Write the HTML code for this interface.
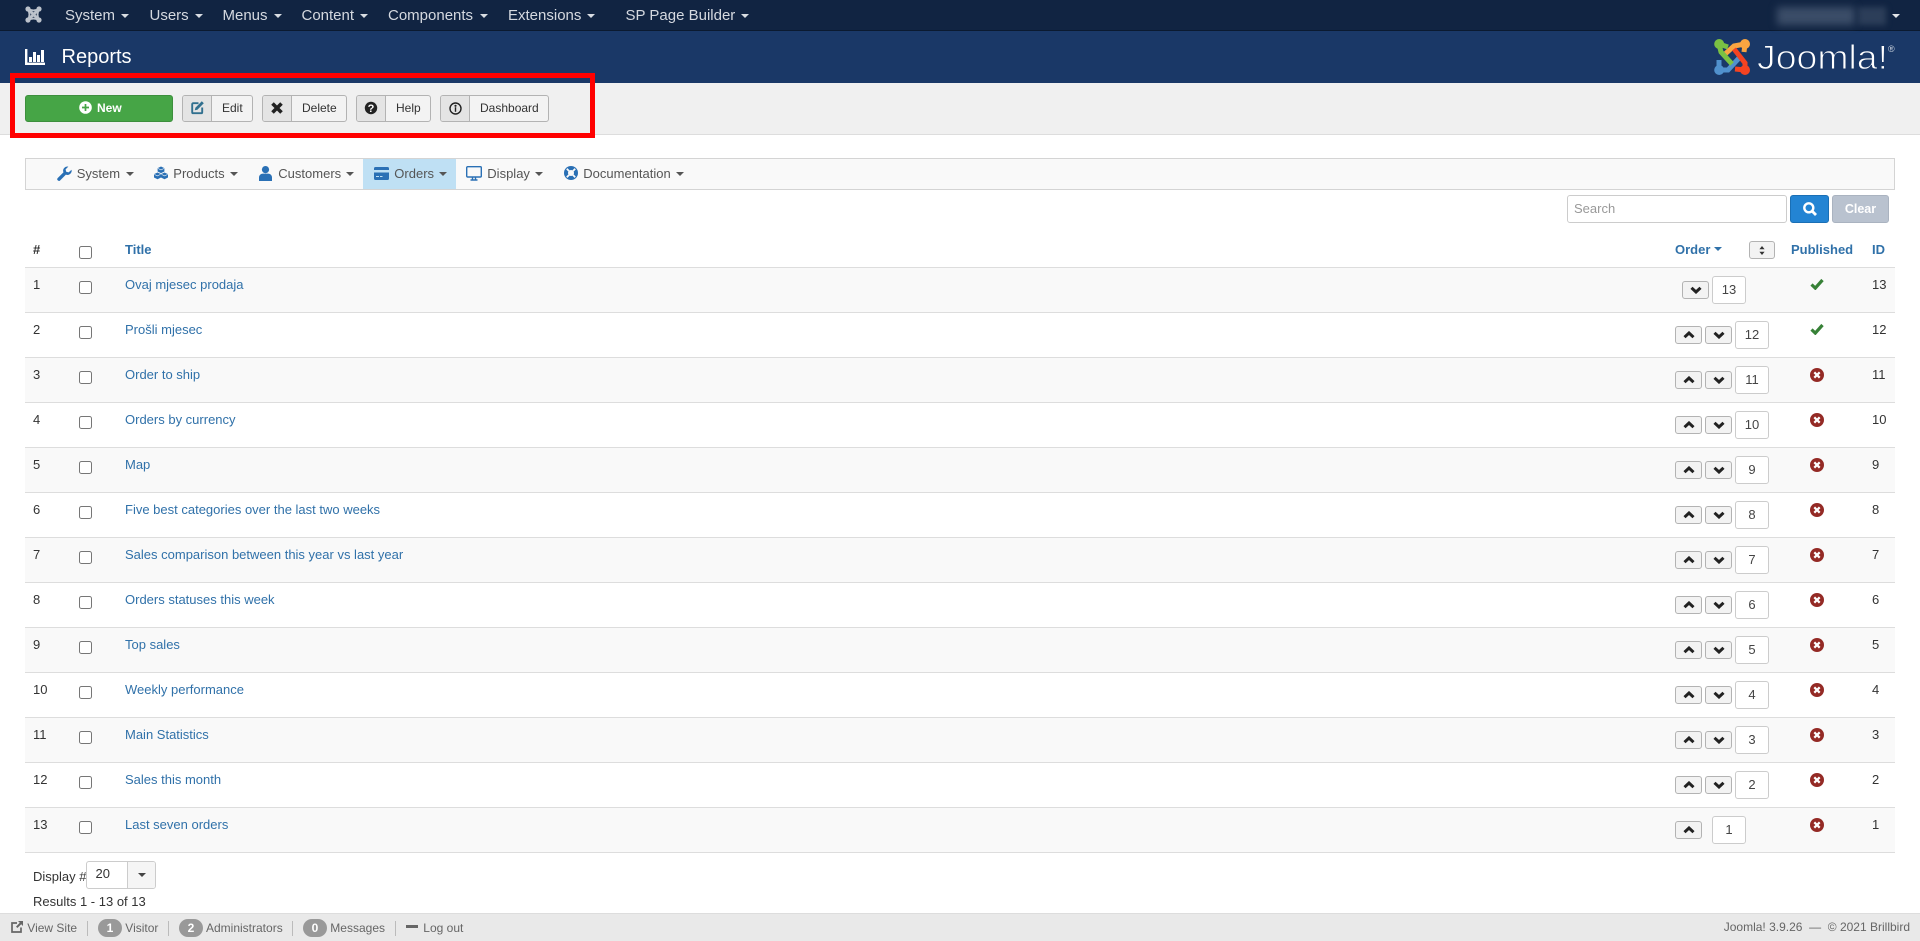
<!DOCTYPE html>
<html lang="en"><head><meta charset="utf-8"><title>Reports</title>
<style>
*{box-sizing:border-box}
html,body{margin:0;padding:0;width:1920px;height:941px;overflow:hidden;background:#fff;font-family:"Liberation Sans",sans-serif;font-size:13px;color:#333}
.a{position:absolute;white-space:nowrap}
svg{position:absolute;overflow:visible}
.nav{color:#d5d9e0;font-size:15px;line-height:20px;top:6px}
.car{position:absolute;width:0;height:0;border-left:4px solid transparent;border-right:4px solid transparent;border-top:4px solid #d9dde3}
.tb{position:absolute;top:95px;height:27px;border:1px solid #b3b3b3;border-radius:3px;background:#f3f3f3;font-size:12px;line-height:25px;color:#333}
.tb i{position:absolute;left:0;top:0;width:29px;height:25px;background:#e4e4e4;border-right:1px solid #b3b3b3;border-radius:2px 0 0 2px}
.tb span{position:absolute;top:0}
.sm{font-size:13px;line-height:18px;top:165px;color:#555}
.car2{position:absolute;top:172px;width:0;height:0;border-left:4px solid transparent;border-right:4px solid transparent;border-top:4px solid #555}
.th{top:241px;line-height:18px;font-weight:bold;color:#3071a9}
.r{position:absolute;left:25px;width:1870px;height:46px;border-top:1px solid #ddd;border-bottom:1px solid #ddd;line-height:18px}
.r.o{background:#f9f9f9}
.r>*{position:absolute}
.n{left:8px;top:8px}
.r input{left:54px;top:13px;margin:0;width:13px;height:13px}
.l{left:100px;top:8px;color:#3071a9}
.id{left:1847px;top:8px}
.b{width:27px;height:18px;top:13px;background:#f3f3f3;border:1px solid #b3b3b3;border-radius:3px}
.u{left:1650px}.d{left:1680px}
.v{left:1710px;top:8px;width:34px;height:28px;background:#fff;border:1px solid #ccc;border-radius:3px;text-align:center;line-height:26px;font-size:13px;color:#444}
.b svg{left:7px;top:4px}
.p{left:1785px;top:10px}
.f{top:919px;font-size:12px;line-height:18px;color:#666}
.sep{position:absolute;top:921px;width:1px;height:15px;background:#bbb}
.bd{position:absolute;top:919px;height:18px;width:24px;border-radius:9px;background:#999;color:#fff;font-weight:bold;font-size:12px;line-height:18px;text-align:center}
</style></head><body>

<div class="a" style="left:0;top:0;width:1920px;height:31px;background:#112442;border-bottom:1px solid #0b1a30"></div>
<div class="a" style="left:0;top:31px;width:1920px;height:52px;background:#1a3867"></div>
<div class="a" style="left:0;top:83px;width:1920px;height:52px;background:#f0f0f0;border-bottom:1px solid #ddd"></div>

<svg style="left:25px;top:6px" width="17" height="17" viewBox="0 0 17 17">
<g stroke="#bcc2cb" stroke-width="3" fill="none"><path d="M3 3 L14 14M14 3 L3 14"/><path d="M3 3C7 5 10 5 14 3M14 3C12 7 12 10 14 14M14 14C10 12 7 12 3 14M3 14C5 10 5 7 3 3" stroke-width="2"/></g>
<g fill="#bcc2cb"><circle cx="3" cy="3" r="2.6"/><circle cx="14" cy="3" r="2.6"/><circle cx="14" cy="14" r="2.6"/><circle cx="3" cy="14" r="2.6"/></g></svg>

<div class="a nav" style="left:65px">System</div><div class="car" style="left:121px;top:14px"></div>
<div class="a nav" style="left:149.5px">Users</div><div class="car" style="left:195px;top:14px"></div>
<div class="a nav" style="left:222.5px">Menus</div><div class="car" style="left:274px;top:14px"></div>
<div class="a nav" style="left:301.5px">Content</div><div class="car" style="left:360px;top:14px"></div>
<div class="a nav" style="left:388px">Components</div><div class="car" style="left:480px;top:14px"></div>
<div class="a nav" style="left:508px">Extensions</div><div class="car" style="left:587px;top:14px"></div>
<div class="a nav" style="left:625.5px">SP Page Builder</div><div class="car" style="left:741px;top:14px"></div>

<div class="a" style="left:1777px;top:7px;width:78px;height:18px;background:#3b4d68;filter:blur(4px)"></div>
<div class="a" style="left:1858px;top:7px;width:28px;height:18px;background:#2c3e59;filter:blur(3px)"></div>
<div class="car" style="left:1892px;top:14px;border-top-color:#e4e6ea"></div>

<svg style="left:25px;top:49px" width="20" height="16" viewBox="0 0 20 16"><g fill="#fff"><rect x="0" y="0" width="2.4" height="16"/><rect x="0" y="13.6" width="20" height="2.4"/><rect x="4" y="8" width="3" height="5"/><rect x="8" y="3" width="3" height="10"/><rect x="12" y="6" width="3" height="7"/><rect x="16" y="1" width="3" height="12"/></g></svg>
<div class="a" style="left:61.5px;top:45px;font-size:20px;line-height:24px;color:#fff">Reports</div>

<svg style="left:1714px;top:39px" width="36" height="36" viewBox="0 0 36 36">
<g fill="none" stroke-width="5">
<path stroke="#5091cd" d="M5 31 L5 21 M5 31 L14 31 L26 18"/>
<path stroke="#f9a541" d="M31 5 L30 13 M31 5 L20 7 L10 16"/>
<path stroke="#f44321" d="M31 31 L21 30 M31 31 L31 24 L20 10"/>
<path stroke="#7ac143" d="M5 5 L14 8 M5 5 L7 13 L18 25"/>
</g>
<circle cx="5.2" cy="5" r="5" fill="#7ac143"/><circle cx="31" cy="5" r="5" fill="#f9a541"/><circle cx="31" cy="31" r="5" fill="#f44321"/><circle cx="5.2" cy="31" r="5" fill="#5091cd"/></svg>
<svg style="left:1757px;top:39px" width="140" height="36" viewBox="0 0 140 36">
<text x="0" y="30" font-family="Liberation Sans" font-size="34" fill="#fff" stroke="#1a3867" stroke-width="1" textLength="131" lengthAdjust="spacingAndGlyphs">Joomla!</text>
<text x="131" y="13" font-family="Liberation Sans" font-size="9" fill="#cfd6e0">®</text></svg>

<!-- toolbar -->
<div class="a" style="left:25px;top:95px;width:148px;height:27px;background:#46a546;border:1px solid #3d8f3d;border-radius:3px"></div>
<svg style="left:79px;top:101px" width="13" height="13" viewBox="0 0 13 13"><circle cx="6.5" cy="6.5" r="6.3" fill="#fff"/><path d="M6.5 3v7M3 6.5h7" stroke="#46a546" stroke-width="1.7"/></svg>
<div class="a" style="left:97px;top:99px;font-size:12px;line-height:18px;color:#fff;font-weight:bold">New</div>

<div class="tb" style="left:182px;width:71px"><i></i><span style="left:39px">Edit</span></div>
<svg style="left:191px;top:101px" width="13" height="13" viewBox="0 0 13 13"><path d="M7.5 2.2H2.2a1 1 0 0 0-1 1v8a1 1 0 0 0 1 1h8a1 1 0 0 0 1-1V6.5" fill="none" stroke="#31708f" stroke-width="1.9"/><path d="M10.8.3l2 2-6.4 6.4-2.6.6.6-2.6z" fill="#31708f"/></svg>

<div class="tb" style="left:262px;width:85px"><i></i><span style="left:39px">Delete</span></div>
<svg style="left:271px;top:102px" width="12" height="12" viewBox="0 0 12 12"><path d="M1.5 1.5L10.5 10.5M10.5 1.5L1.5 10.5" stroke="#222" stroke-width="3.6"/></svg>

<div class="tb" style="left:356px;width:75px"><i></i><span style="left:39px">Help</span></div>
<svg style="left:365px;top:102px" width="12" height="12" viewBox="0 0 12 12"><circle cx="6" cy="6" r="6.2" fill="#222"/><text x="6" y="10" font-family="Liberation Sans" font-weight="bold" font-size="11" fill="#fff" text-anchor="middle">?</text></svg>

<div class="tb" style="left:440px;width:109px"><i></i><span style="left:39px">Dashboard</span></div>
<svg style="left:449px;top:102px" width="13" height="13" viewBox="0 0 13 13"><circle cx="6.5" cy="6.5" r="5.5" fill="none" stroke="#222" stroke-width="1.4"/><circle cx="6.5" cy="3.8" r="1.1" fill="#222"/><rect x="5.8" y="5.2" width="1.4" height="4.6" fill="#222"/></svg>

<div class="a" style="left:10px;top:73px;width:585px;height:65px;border:5px solid #f00"></div>

<!-- submenu -->
<div class="a" style="left:25px;top:158px;width:1870px;height:32px;background:#f9f9f9;border:1px solid #d4d4d4"></div>
<div class="a" style="left:363px;top:159px;width:93px;height:30px;background:#bfe0f4"></div>

<svg style="left:57px;top:166px" width="15" height="15" viewBox="0 0 14 14"><path d="M13.6 3.5a4 4 0 0 1-5.3 4.6L3 13.4a1.4 1.4 0 0 1-2.3-2.2L6 6A4 4 0 0 1 10.6.6L8 3.2l.6 2.2 2.2.6z" fill="#2a70b5"/></svg>
<div class="a sm" style="left:76.7px">System</div><div class="car2" style="left:126px"></div>

<svg style="left:154px;top:166px" width="14" height="14" viewBox="0 0 14 13"><g fill="#2a70b5"><path d="M7 0l3.4 1.6v3.4L7 6.6 3.6 5V1.6z"/><path d="M3.5 6L7 7.6v3.4l-3.5 1.8L0 11V7.6z"/><path d="M10.5 6L14 7.6v3.4l-3.5 1.8L7 11V7.6z"/></g><path d="M3.8 1.9L7 3.4l3.2-1.5M.3 7.9l3.1 1.5 3.1-1.5M7.5 7.9l3.1 1.5 3.1-1.5" fill="none" stroke="#f9f9f9" stroke-width=".6"/></svg>
<div class="a sm" style="left:173.3px">Products</div><div class="car2" style="left:230px"></div>

<svg style="left:259px;top:166px" width="13" height="15" viewBox="0 0 13 15"><circle cx="6.5" cy="3.6" r="3.6" fill="#2a70b5"/><path d="M0 15v-3.5C0 9 2 7.6 3.8 7.6h5.4C11 7.6 13 9 13 11.5V15z" fill="#2a70b5"/></svg>
<div class="a sm" style="left:278.3px">Customers</div><div class="car2" style="left:346px"></div>

<svg style="left:374px;top:167px" width="15" height="13" viewBox="0 0 15 13"><path d="M1.5 0h12A1.5 1.5 0 0 1 15 1.5V3H0V1.5A1.5 1.5 0 0 1 1.5 0zM0 5.5h15v6a1.5 1.5 0 0 1-1.5 1.5h-12A1.5 1.5 0 0 1 0 11.5z" fill="#2a70b5"/><path d="M2 9.5h3M6 9.5h2.5" stroke="#bfe0f4" stroke-width="1"/></svg>
<div class="a sm" style="left:394.3px">Orders</div><div class="car2" style="left:439px"></div>

<svg style="left:466px;top:166px" width="16" height="15" viewBox="0 0 16 15"><rect x=".7" y=".7" width="14.6" height="10.3" rx="1" fill="none" stroke="#2a70b5" stroke-width="1.4"/><path d="M6.5 11.5v2M9.5 11.5v2M4.5 14h7" stroke="#2a70b5" stroke-width="1.4"/></svg>
<div class="a sm" style="left:487.3px">Display</div><div class="car2" style="left:535px"></div>

<svg style="left:564px;top:166px" width="14" height="14" viewBox="0 0 14 14"><circle cx="7" cy="7" r="7" fill="#2a70b5"/><circle cx="7" cy="7" r="3" fill="#f9f9f9"/><path d="M2.8 2.8L5 5M11.2 2.8L9 5M2.8 11.2L5 9M11.2 11.2L9 9" stroke="#f9f9f9" stroke-width="1.8"/></svg>
<div class="a sm" style="left:583.3px">Documentation</div><div class="car2" style="left:676px"></div>

<!-- search -->
<div class="a" style="left:1567px;top:195px;width:220px;height:28px;background:#fff;border:1px solid #ccc;border-radius:3px;padding-left:6px;line-height:26px;color:#999">Search</div>
<div class="a" style="left:1790px;top:195px;width:39px;height:28px;background:#2384d3;border:1px solid #1a6fb5;border-radius:3px"></div>
<svg style="left:1803px;top:202px" width="14" height="14" viewBox="0 0 14 14"><circle cx="5.8" cy="5.8" r="4.5" fill="none" stroke="#fff" stroke-width="2.4"/><path d="M9 9L13 13" stroke="#fff" stroke-width="2.8"/></svg>
<div class="a" style="left:1832px;top:195px;width:57px;height:28px;background:#b9c2cf;border:1px solid #aab3c0;border-radius:3px;text-align:center;line-height:26px;color:#fff;font-weight:bold;font-size:12.5px">Clear</div>

<!-- table head -->
<div class="a" style="left:33px;top:241px;line-height:18px;font-weight:bold;color:#333">#</div>
<input type="checkbox" class="a" style="left:79px;top:246px;margin:0;width:13px;height:13px">
<div class="a th" style="left:125px">Title</div>
<div class="a th" style="left:1675px">Order</div>
<div class="a" style="left:1714px;top:247px;width:0;height:0;border-left:4px solid transparent;border-right:4px solid transparent;border-top:4px solid #3071a9"></div>
<div class="a" style="left:1749px;top:241px;width:26px;height:18px;background:#f3f3f3;border:1px solid #b3b3b3;border-radius:3px"></div>
<svg style="left:1759px;top:246px" width="6" height="9" viewBox="0 0 6 9"><path d="M3 0L5.6 3.2H.4zM3 9L.4 5.8h5.2z" fill="#333"/></svg>
<div class="a th" style="left:1791px">Published</div>
<div class="a th" style="left:1872px">ID</div>

<svg width="0" height="0" style="position:absolute"><defs>
<symbol id="up" viewBox="0 0 12 8"><path d="M1.5 6.2L6 2l4.5 4.2" fill="none" stroke="#222" stroke-width="3"/></symbol>
<symbol id="dn" viewBox="0 0 12 8"><path d="M1.5 1.8L6 6l4.5-4.2" fill="none" stroke="#222" stroke-width="3"/></symbol>
<symbol id="ok" viewBox="0 0 14 12"><path d="M1.5 6.5l3.8 3.6L12.5 2" fill="none" stroke="#378137" stroke-width="3.2"/></symbol>
<symbol id="no" viewBox="0 0 14 14"><circle cx="7" cy="7" r="7" fill="#942a25"/><path d="M4.3 4.3l5.4 5.4M9.7 4.3l-5.4 5.4" stroke="#fff" stroke-width="2.2"/></symbol>
</defs></svg>

<div class="r o" style="top:267px"><span class="n">1</span><input type="checkbox"><span class="l">Ovaj mjesec prodaja</span>
<div class="b" style="left:1657px"><svg width="12" height="8"><use href="#dn"/></svg></div><div class="v" style="left:1687px">13</div>
<svg class="p" width="14" height="12" style="top:10px"><use href="#ok"/></svg><span class="id">13</span></div>

<div class="r" style="top:312px"><span class="n">2</span><input type="checkbox"><span class="l">Prošli mjesec</span>
<div class="b u"><svg width="12" height="8"><use href="#up"/></svg></div><div class="b d"><svg width="12" height="8"><use href="#dn"/></svg></div><div class="v">12</div>
<svg class="p" width="14" height="12" style="top:10px"><use href="#ok"/></svg><span class="id">12</span></div>

<div class="r o" style="top:357px"><span class="n">3</span><input type="checkbox"><span class="l">Order to ship</span>
<div class="b u"><svg width="12" height="8"><use href="#up"/></svg></div><div class="b d"><svg width="12" height="8"><use href="#dn"/></svg></div><div class="v">11</div>
<svg class="p" width="14" height="14"><use href="#no"/></svg><span class="id">11</span></div>

<div class="r" style="top:402px"><span class="n">4</span><input type="checkbox"><span class="l">Orders by currency</span>
<div class="b u"><svg width="12" height="8"><use href="#up"/></svg></div><div class="b d"><svg width="12" height="8"><use href="#dn"/></svg></div><div class="v">10</div>
<svg class="p" width="14" height="14"><use href="#no"/></svg><span class="id">10</span></div>

<div class="r o" style="top:447px"><span class="n">5</span><input type="checkbox"><span class="l">Map</span>
<div class="b u"><svg width="12" height="8"><use href="#up"/></svg></div><div class="b d"><svg width="12" height="8"><use href="#dn"/></svg></div><div class="v">9</div>
<svg class="p" width="14" height="14"><use href="#no"/></svg><span class="id">9</span></div>

<div class="r" style="top:492px"><span class="n">6</span><input type="checkbox"><span class="l">Five best categories over the last two weeks</span>
<div class="b u"><svg width="12" height="8"><use href="#up"/></svg></div><div class="b d"><svg width="12" height="8"><use href="#dn"/></svg></div><div class="v">8</div>
<svg class="p" width="14" height="14"><use href="#no"/></svg><span class="id">8</span></div>

<div class="r o" style="top:537px"><span class="n">7</span><input type="checkbox"><span class="l">Sales comparison between this year vs last year</span>
<div class="b u"><svg width="12" height="8"><use href="#up"/></svg></div><div class="b d"><svg width="12" height="8"><use href="#dn"/></svg></div><div class="v">7</div>
<svg class="p" width="14" height="14"><use href="#no"/></svg><span class="id">7</span></div>

<div class="r" style="top:582px"><span class="n">8</span><input type="checkbox"><span class="l">Orders statuses this week</span>
<div class="b u"><svg width="12" height="8"><use href="#up"/></svg></div><div class="b d"><svg width="12" height="8"><use href="#dn"/></svg></div><div class="v">6</div>
<svg class="p" width="14" height="14"><use href="#no"/></svg><span class="id">6</span></div>

<div class="r o" style="top:627px"><span class="n">9</span><input type="checkbox"><span class="l">Top sales</span>
<div class="b u"><svg width="12" height="8"><use href="#up"/></svg></div><div class="b d"><svg width="12" height="8"><use href="#dn"/></svg></div><div class="v">5</div>
<svg class="p" width="14" height="14"><use href="#no"/></svg><span class="id">5</span></div>

<div class="r" style="top:672px"><span class="n">10</span><input type="checkbox"><span class="l">Weekly performance</span>
<div class="b u"><svg width="12" height="8"><use href="#up"/></svg></div><div class="b d"><svg width="12" height="8"><use href="#dn"/></svg></div><div class="v">4</div>
<svg class="p" width="14" height="14"><use href="#no"/></svg><span class="id">4</span></div>

<div class="r o" style="top:717px"><span class="n">11</span><input type="checkbox"><span class="l">Main Statistics</span>
<div class="b u"><svg width="12" height="8"><use href="#up"/></svg></div><div class="b d"><svg width="12" height="8"><use href="#dn"/></svg></div><div class="v">3</div>
<svg class="p" width="14" height="14"><use href="#no"/></svg><span class="id">3</span></div>

<div class="r" style="top:762px"><span class="n">12</span><input type="checkbox"><span class="l">Sales this month</span>
<div class="b u"><svg width="12" height="8"><use href="#up"/></svg></div><div class="b d"><svg width="12" height="8"><use href="#dn"/></svg></div><div class="v">2</div>
<svg class="p" width="14" height="14"><use href="#no"/></svg><span class="id">2</span></div>

<div class="r o" style="top:807px"><span class="n">13</span><input type="checkbox"><span class="l">Last seven orders</span>
<div class="b u"><svg width="12" height="8"><use href="#up"/></svg></div><div class="v" style="left:1687px">1</div>
<svg class="p" width="14" height="14"><use href="#no"/></svg><span class="id">1</span></div>

<!-- display -->
<div class="a" style="left:33px;top:868px;line-height:18px">Display #</div>
<div class="a" style="left:86px;top:861px;width:70px;height:28px;background:#fff;border:1px solid #ccc;border-radius:3px"></div>
<div class="a" style="left:127px;top:862px;width:28px;height:26px;background:#f5f5f5;border-left:1px solid #ccc;border-radius:0 2px 2px 0"></div>
<div class="a" style="left:95.5px;top:865px;line-height:18px;font-size:13px">20</div>
<div class="a" style="left:138px;top:873px;width:0;height:0;border-left:4px solid transparent;border-right:4px solid transparent;border-top:4px solid #444"></div>
<div class="a" style="left:33px;top:893px;line-height:18px">Results 1 - 13 of 13</div>

<!-- footer -->
<div class="a" style="left:0;top:913px;width:1920px;height:28px;background:#e9e9e9;border-top:1px solid #ddd"></div>
<svg style="left:11px;top:921px" width="12" height="12" viewBox="0 0 12 12"><path d="M6 2H1v9h9V6.5" fill="none" stroke="#666" stroke-width="1.7"/><path d="M7 0h5v5l-1.8-1.8L6.4 7 5 5.6l3.8-3.8z" fill="#666"/></svg>
<div class="a f" style="left:27.3px">View Site</div><div class="sep" style="left:87px"></div>
<div class="bd" style="left:98px">1</div><div class="a f" style="left:125.3px">Visitor</div><div class="sep" style="left:168px"></div>
<div class="bd" style="left:179px">2</div><div class="a f" style="left:206px">Administrators</div><div class="sep" style="left:292px"></div>
<div class="bd" style="left:303px">0</div><div class="a f" style="left:330.3px">Messages</div><div class="sep" style="left:395px"></div>
<div class="a" style="left:406px;top:925px;width:12px;height:3px;background:#666"></div>
<div class="a f" style="left:423.3px">Log out</div>
<div class="a f" style="right:10px;top:918px">Joomla! 3.9.26 &nbsp;—&nbsp; © 2021 Brillbird</div>
</body></html>
